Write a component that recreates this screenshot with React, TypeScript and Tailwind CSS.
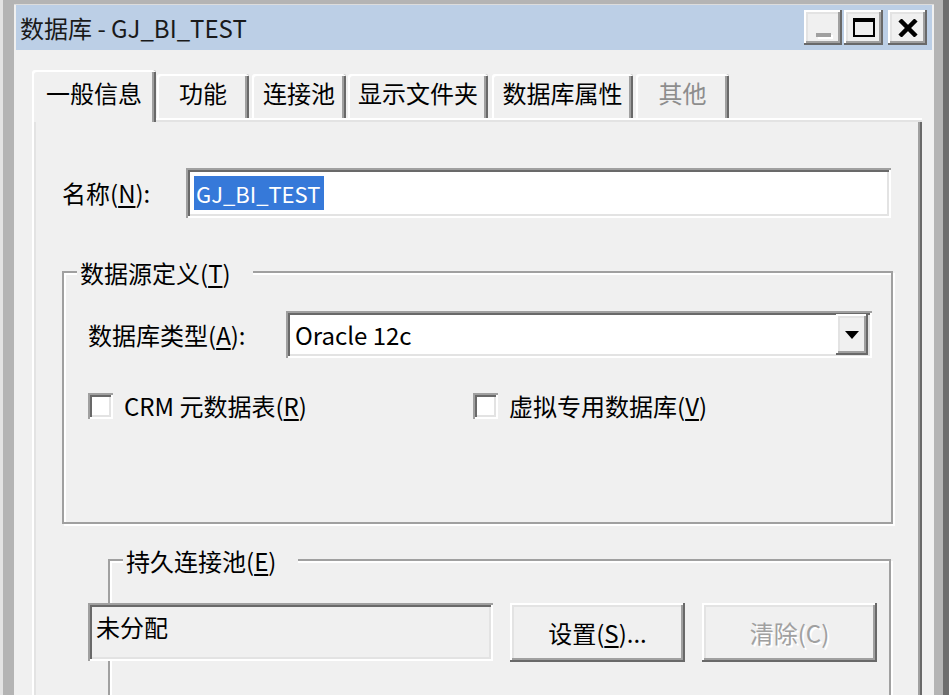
import { ReactNode } from 'react';

const raised =
  'shadow-[inset_-2px_-2px_0_#696969,inset_2px_2px_0_#ffffff,inset_-4px_-4px_0_#a0a0a0,inset_4px_4px_0_#e3e3e3]';
const sunken =
  'shadow-[inset_2px_2px_0_#a0a0a0,inset_-2px_-2px_0_#ffffff,inset_4px_4px_0_#696969,inset_-4px_-4px_0_#e3e3e3]';
const etched = 'border-2 border-[#a0a0a0] shadow-[inset_2px_2px_0_#ffffff,2px_2px_0_#ffffff]';

function Key({ k }: { k: string }) {
  return (
    <>
      (<span className="underline underline-offset-[3px] decoration-[2px]">{k}</span>)
    </>
  );
}

function Tab({ children, className, disabled }: { children: ReactNode; className: string; disabled?: boolean }) {
  return (
    <div
      className={`flex h-[44px] items-center justify-center rounded-t-[3px] shadow-[inset_2px_2px_0_#ffffff,inset_-2px_0_0_#696969,inset_-4px_0_0_#a0a0a0] ${className} ${
        disabled ? 'text-[#8d8d8d]' : 'text-black'
      }`}
    >
      <span className="-mt-[7px]">{children}</span>
    </div>
  );
}

function Checkbox({ children, className }: { children: ReactNode; className: string }) {
  return (
    <div className={`flex items-center ${className}`}>
      <div className={`h-[26px] w-[25px] bg-white ${sunken}`} />
      <span className="ml-[11px]">{children}</span>
    </div>
  );
}

function GroupBox({ label, className, children }: { label: ReactNode; className: string; children: ReactNode }) {
  return (
    <div className={`relative shrink-0 ${etched} ${className}`}>
      <div className="absolute left-[13px] top-[-17px] flex h-[34px] items-center bg-[#f0f0f0] pl-[3px] pr-[22px]">
        {label}
      </div>
      {children}
    </div>
  );
}

export default function App() {
  return (
    <div className="flex h-[695px] w-[949px] overflow-hidden bg-[#f0f0f0] font-['Noto_Sans_CJK_SC','Liberation_Sans',sans-serif] text-[24px] leading-none text-black">
      <div className="w-[3px] shrink-0 bg-[#e3e3e3]" />
      <div className="w-[11px] shrink-0 bg-[#b4b4b4]" />

      <div className="flex w-[920px] shrink-0 flex-col">
        <div className="h-[4px] shrink-0 bg-[#b4b4b4]" />
        <div className="h-[1px] shrink-0 bg-[#dcdcdc]" />

        {/* title bar */}
        <div className="mx-[2px] flex h-[45px] shrink-0 items-start bg-[#bccfe6] pr-[5px] pt-[5px]">
          <div className="flex h-[35px] flex-1 items-center pl-[4px] text-[#1a1a1a]">数据库 - GJ_BI_TEST</div>
          <div className={`flex h-[35px] w-[38px] items-end justify-center bg-[#f0f0f0] pb-[8px] ${raised}`}>
            <div className="h-[4px] w-[15px] bg-[#a0a0a0] shadow-[2px_2px_0_#ffffff]" />
          </div>
          <div className={`ml-[2px] flex h-[35px] w-[39px] items-center justify-center bg-[#f0f0f0] ${raised}`}>
            <div className="h-[19px] w-[22px] border-2 border-t-[4px] border-black" />
          </div>
          <div className={`ml-[5px] flex h-[35px] w-[39px] items-center justify-center bg-[#f0f0f0] ${raised}`}>
            <svg width="20" height="18" viewBox="0 0 20 18">
              <path d="M2 1 L18 17 M18 1 L2 17" stroke="#000" strokeWidth="4.5" />
            </svg>
          </div>
        </div>

        {/* tabs */}
        <div className="flex shrink-0 items-end pl-[18px] pt-[20px]">
          <div className="relative z-10 mb-[-4px] flex h-[52px] w-[124px] items-center justify-center rounded-t-[3px] bg-[#f0f0f0] shadow-[inset_2px_2px_0_#ffffff,inset_-2px_0_0_#696969,inset_-4px_0_0_#a0a0a0]">
            <span className="-mt-[6px]">一般信息</span>
          </div>
          <Tab className="w-[92px] ml-[1px]">功能</Tab>
          <Tab className="w-[94px] ml-[3px]">连接池</Tab>
          <Tab className="w-[140px] ml-[2px]">显示文件夹</Tab>
          <Tab className="w-[141px] ml-[4px]">数据库属性</Tab>
          <Tab className="w-[93px] ml-[3px]" disabled>
            其他
          </Tab>
        </div>

        {/* tab panel */}
        <div className="ml-[18px] flex w-[890px] flex-1 flex-col pl-[30px] pt-[50px] shadow-[inset_2px_2px_0_#ffffff,inset_4px_4px_0_#e3e3e3,inset_-2px_0_0_#696969,inset_-4px_0_0_#a0a0a0]">
          <div className="flex h-[50px] shrink-0 items-center">
            <div className="w-[124px]">
              名称<Key k="N" />:
            </div>
            <div className={`flex h-[50px] w-[705px] items-center bg-white pl-[8px] ${sunken}`}>
              <span className="flex h-[34px] items-center bg-[#3679d9] pl-[2px] pr-[4px] text-[22px] text-white">GJ_BI_TEST</span>
            </div>
          </div>

          <GroupBox
            className="mt-[53px] h-[253px] w-[831px]"
            label={
              <span>
                数据源定义<Key k="T" />
              </span>
            }
          >
            <div className="mt-[38px] flex h-[47px] items-center pl-[24px]">
              <div className="w-[198px]">
                数据库类型<Key k="A" />:
              </div>
              <div className={`flex h-[47px] w-[586px] items-center bg-white pl-[9px] pr-[4px] ${sunken}`}>
                <span className="flex-1">Oracle 12c</span>
                <div className={`flex h-[41px] w-[32px] items-center justify-center bg-[#f0f0f0] ${raised}`}>
                  <svg width="14" height="8" viewBox="0 0 14 8">
                    <path d="M0 0 H14 L7 8 Z" fill="#000" />
                  </svg>
                </div>
              </div>
            </div>
            <div className="mt-[35px] flex h-[26px] items-center pl-[24px]">
              <Checkbox className="w-[385px]">
                CRM 元数据表<Key k="R" />
              </Checkbox>
              <Checkbox className="">
                虚拟专用数据库<Key k="V" />
              </Checkbox>
            </div>
          </GroupBox>

          <GroupBox
            className="ml-[46px] mt-[35px] h-[200px] w-[783px]"
            label={
              <span>
                持久连接池<Key k="E" />
              </span>
            }
          >
            <div className="ml-[-22px] mt-[42px] flex items-start">
              <div className={`relative z-10 h-[58px] w-[405px] bg-[#f0f0f0] pl-[8px] pt-[12px] ${sunken}`}>未分配</div>
              <div className={`ml-[17px] flex h-[59px] w-[175px] items-center justify-center bg-[#f0f0f0] ${raised}`}>
                设置<Key k="S" />...
              </div>
              <div
                className={`ml-[17px] flex h-[59px] w-[175px] items-center justify-center bg-[#f0f0f0] text-[#a0a0a0] [text-shadow:2px_2px_0_#ffffff] ${raised}`}
              >
                清除(C)
              </div>
            </div>
          </GroupBox>
        </div>
      </div>

      <div className="w-[9px] shrink-0 bg-[#b4b4b4]" />
      <div className="w-[6px] shrink-0 bg-[#6d6d6d]" />
    </div>
  );
}
